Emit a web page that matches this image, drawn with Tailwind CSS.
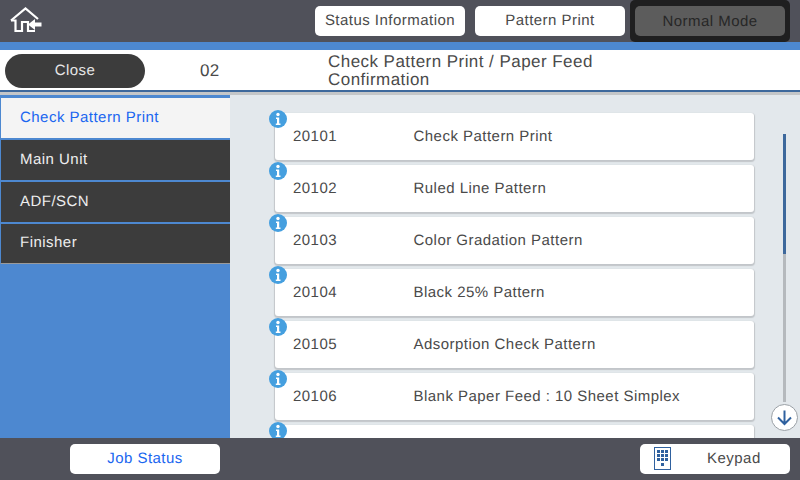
<!DOCTYPE html>
<html>
<head>
<meta charset="utf-8">
<script src="https://cdn.jsdelivr.net/npm/@tailwindcss/browser@4"></script>
</head>
<body class="m-0">
<div class="w-[800px] h-[480px] overflow-hidden flex flex-col font-['Liberation_Sans',Arial,sans-serif] text-[15px] tracking-[0.47px] text-[#4a4a4a] [text-rendering:geometricPrecision]">
  <!-- top bar -->
  <div class="h-[42px] shrink-0 bg-[#50515a] flex items-center relative">
    <svg class="ml-[10px] mt-[-3px]" width="33" height="26" viewBox="0 0 33 26" fill="none">
      <path d="M1 13.5 L15.5 1.5 L28 12" stroke="#fff" stroke-width="2.2" fill="none"/>
      <path d="M1 13.5 H5.5 V24 H12 V15 H18 V24 H25" stroke="#fff" stroke-width="2.2" fill="none"/>
      <path d="M18 17.5 L25 12 V15.5 H31.5 V19.5 H25 V23 Z" fill="#fff"/>
    </svg>
    <div class="ml-auto flex items-center mr-[10px]">
      <div class="w-[150px] h-[30px] mt-[-1px] pt-[2px] bg-white rounded-[5px] flex items-center justify-center">Status Information</div>
      <div class="w-[150px] h-[30px] mt-[-1px] pt-[2px] ml-[10px] bg-white rounded-[5px] flex items-center justify-center">Pattern Print</div>
      <div class="ml-[5px] w-[160px] h-[42px] bg-[#1f1f20] rounded-[5px] p-[5px]">
        <div class="w-[150px] h-[30px] mt-[1px] pt-[2px] bg-[#5c5c5c] rounded-[5px] flex items-center justify-center text-[#272727]">Normal Mode</div>
      </div>
    </div>
  </div>
  <div class="h-[8px] shrink-0 bg-[#4d88d0]"></div>
  <!-- header -->
  <div class="h-[42px] shrink-0 bg-white border-b-2 border-[#3d689c] flex items-center">
    <div class="ml-[5px] w-[140px] h-[34px] mt-[2px] rounded-full bg-[#3c3c3c] text-[#e6e6e6] flex items-center justify-center">Close</div>
    <div class="ml-[55px] w-[128px] text-[17px] tracking-[0.4px] mt-[1px]">02</div>
    <div class="w-[300px] text-[17px] leading-[18px] tracking-[0.45px] mt-[2px]">Check Pattern Print / Paper Feed Confirmation</div>
  </div>
  <!-- main -->
  <div class="flex-1 min-h-0 flex bg-[#e3e8ec] border-t-[3px] border-[#c4c6c8]">
    <div class="w-[230px] shrink-0 bg-[#4d88d0] flex flex-col">
      <div class="mt-[1px] h-[42px] border-t-2 border-[#4d88d0] border-l border-l-[#4d88d0] bg-[#f4f4f4] text-[#1a66f0] flex items-center pl-[19px] pt-[1px] shrink-0">Check Pattern Print</div>
      <div class="h-[42px] border-t-2 border-[#4d88d0] border-l border-l-[#4d88d0] bg-[#3c3c3c] text-[#eee] flex items-center pl-[19px] shrink-0">Main Unit</div>
      <div class="h-[42px] border-t-2 border-[#4d88d0] border-l border-l-[#4d88d0] bg-[#3c3c3c] text-[#eee] flex items-center pl-[19px] shrink-0">ADF/SCN</div>
      <div class="h-[42px] border-t-2 border-b border-[#4d88d0] border-b-[#9a9a9a] border-l border-l-[#4d88d0] bg-[#3c3c3c] text-[#eee] flex items-center pl-[19px] shrink-0">Finisher</div>
    </div>
    <div class="flex-1 relative overflow-hidden">
      <div class="pl-[45px] pt-[18px] flex flex-col gap-[5px]">

        <div class="relative w-[479px] h-[47px] shrink-0 pt-[2px] bg-white rounded-[3px] shadow-[0_1px_1px_1px_#c2c6ca] flex items-center">
          <svg class="absolute left-[-6px] top-[-3px]" width="18" height="18" viewBox="0 0 18 18"><circle cx="9" cy="9" r="9" fill="#459fdf"/><circle cx="9" cy="4.5" r="1.7" fill="#fff"/><path d="M7 7.5H10.2V13.5H11.5V15H6.8V13.5H8V9H7Z" fill="#fff"/></svg>
          <span class="ml-[18px] w-[120.5px]">20101</span><span>Check Pattern Print</span>
        </div>
        <div class="relative w-[479px] h-[47px] shrink-0 pt-[2px] bg-white rounded-[3px] shadow-[0_1px_1px_1px_#c2c6ca] flex items-center">
          <svg class="absolute left-[-6px] top-[-3px]" width="18" height="18" viewBox="0 0 18 18"><circle cx="9" cy="9" r="9" fill="#459fdf"/><circle cx="9" cy="4.5" r="1.7" fill="#fff"/><path d="M7 7.5H10.2V13.5H11.5V15H6.8V13.5H8V9H7Z" fill="#fff"/></svg>
          <span class="ml-[18px] w-[120.5px]">20102</span><span>Ruled Line Pattern</span>
        </div>
        <div class="relative w-[479px] h-[47px] shrink-0 pt-[2px] bg-white rounded-[3px] shadow-[0_1px_1px_1px_#c2c6ca] flex items-center">
          <svg class="absolute left-[-6px] top-[-3px]" width="18" height="18" viewBox="0 0 18 18"><circle cx="9" cy="9" r="9" fill="#459fdf"/><circle cx="9" cy="4.5" r="1.7" fill="#fff"/><path d="M7 7.5H10.2V13.5H11.5V15H6.8V13.5H8V9H7Z" fill="#fff"/></svg>
          <span class="ml-[18px] w-[120.5px]">20103</span><span>Color Gradation Pattern</span>
        </div>
        <div class="relative w-[479px] h-[47px] shrink-0 pt-[2px] bg-white rounded-[3px] shadow-[0_1px_1px_1px_#c2c6ca] flex items-center">
          <svg class="absolute left-[-6px] top-[-3px]" width="18" height="18" viewBox="0 0 18 18"><circle cx="9" cy="9" r="9" fill="#459fdf"/><circle cx="9" cy="4.5" r="1.7" fill="#fff"/><path d="M7 7.5H10.2V13.5H11.5V15H6.8V13.5H8V9H7Z" fill="#fff"/></svg>
          <span class="ml-[18px] w-[120.5px]">20104</span><span>Black 25% Pattern</span>
        </div>
        <div class="relative w-[479px] h-[47px] shrink-0 pt-[2px] bg-white rounded-[3px] shadow-[0_1px_1px_1px_#c2c6ca] flex items-center">
          <svg class="absolute left-[-6px] top-[-3px]" width="18" height="18" viewBox="0 0 18 18"><circle cx="9" cy="9" r="9" fill="#459fdf"/><circle cx="9" cy="4.5" r="1.7" fill="#fff"/><path d="M7 7.5H10.2V13.5H11.5V15H6.8V13.5H8V9H7Z" fill="#fff"/></svg>
          <span class="ml-[18px] w-[120.5px]">20105</span><span>Adsorption Check Pattern</span>
        </div>
        <div class="relative w-[479px] h-[47px] shrink-0 pt-[2px] bg-white rounded-[3px] shadow-[0_1px_1px_1px_#c2c6ca] flex items-center">
          <svg class="absolute left-[-6px] top-[-3px]" width="18" height="18" viewBox="0 0 18 18"><circle cx="9" cy="9" r="9" fill="#459fdf"/><circle cx="9" cy="4.5" r="1.7" fill="#fff"/><path d="M7 7.5H10.2V13.5H11.5V15H6.8V13.5H8V9H7Z" fill="#fff"/></svg>
          <span class="ml-[18px] w-[120.5px]">20106</span><span>Blank Paper Feed : 10 Sheet Simplex</span>
        </div>
        <div class="relative w-[479px] h-[47px] shrink-0 bg-white rounded-[3px] shadow-[0_1px_1px_1px_#c2c6ca] flex items-center">
          <svg class="absolute left-[-6px] top-[-3px]" width="18" height="18" viewBox="0 0 18 18"><circle cx="9" cy="9" r="9" fill="#459fdf"/><circle cx="9" cy="4.5" r="1.7" fill="#fff"/><path d="M7 7.5H10.2V13.5H11.5V15H6.8V13.5H8V9H7Z" fill="#fff"/></svg>
        </div>
      </div>
      <!-- scrollbar -->
      <div class="absolute left-[553px] top-[39px] w-[3px] h-[268px] bg-[#b5b9bd]">
        <div class="w-[3px] h-[120px] bg-[#3d689c]"></div>
      </div>
      <div class="absolute left-[541px] top-[309px] w-[27px] h-[27px] rounded-full bg-white border border-[#9aa0a6] flex items-center justify-center">
        <svg width="19" height="19" viewBox="0 0 19 19" fill="none"><path d="M9.5 2.5V16M3 9.5L9.5 16L16 9.5" stroke="#2f619f" stroke-width="2"/></svg>
      </div>
    </div>
  </div>
  <!-- bottom -->
  <div class="h-[42px] shrink-0 bg-[#50515a] flex items-center">
    <div class="ml-[70px] w-[150px] h-[30px] mt-[-1px] pt-[2px] bg-white rounded-[5px] flex items-center justify-center text-[#1a66f0]">Job Status</div>
    <div class="ml-auto mr-[10px] w-[150px] h-[30px] mt-[-1px] bg-white rounded-[5px] flex items-center relative">
      <svg class="ml-[14px]" width="18" height="23" viewBox="0 0 18 23">
        <rect x="0.5" y="0.5" width="16" height="22" fill="none" stroke="#2f619f"/>
        <g fill="#2f619f">
          <rect x="3" y="3" width="3" height="3"/><rect x="7" y="3" width="3" height="3"/><rect x="11" y="3" width="3" height="3"/>
          <rect x="3" y="7" width="3" height="3"/><rect x="7" y="7" width="3" height="3"/><rect x="11" y="7" width="3" height="3"/>
          <rect x="3" y="11" width="3" height="3"/><rect x="7" y="11" width="3" height="3"/><rect x="11" y="11" width="3" height="3"/>
          <rect x="7" y="16" width="3" height="3"/>
        </g>
      </svg>
      <span class="ml-[35px] mt-[2px]">Keypad</span>
    </div>
  </div>
</div>
</body>
</html>
